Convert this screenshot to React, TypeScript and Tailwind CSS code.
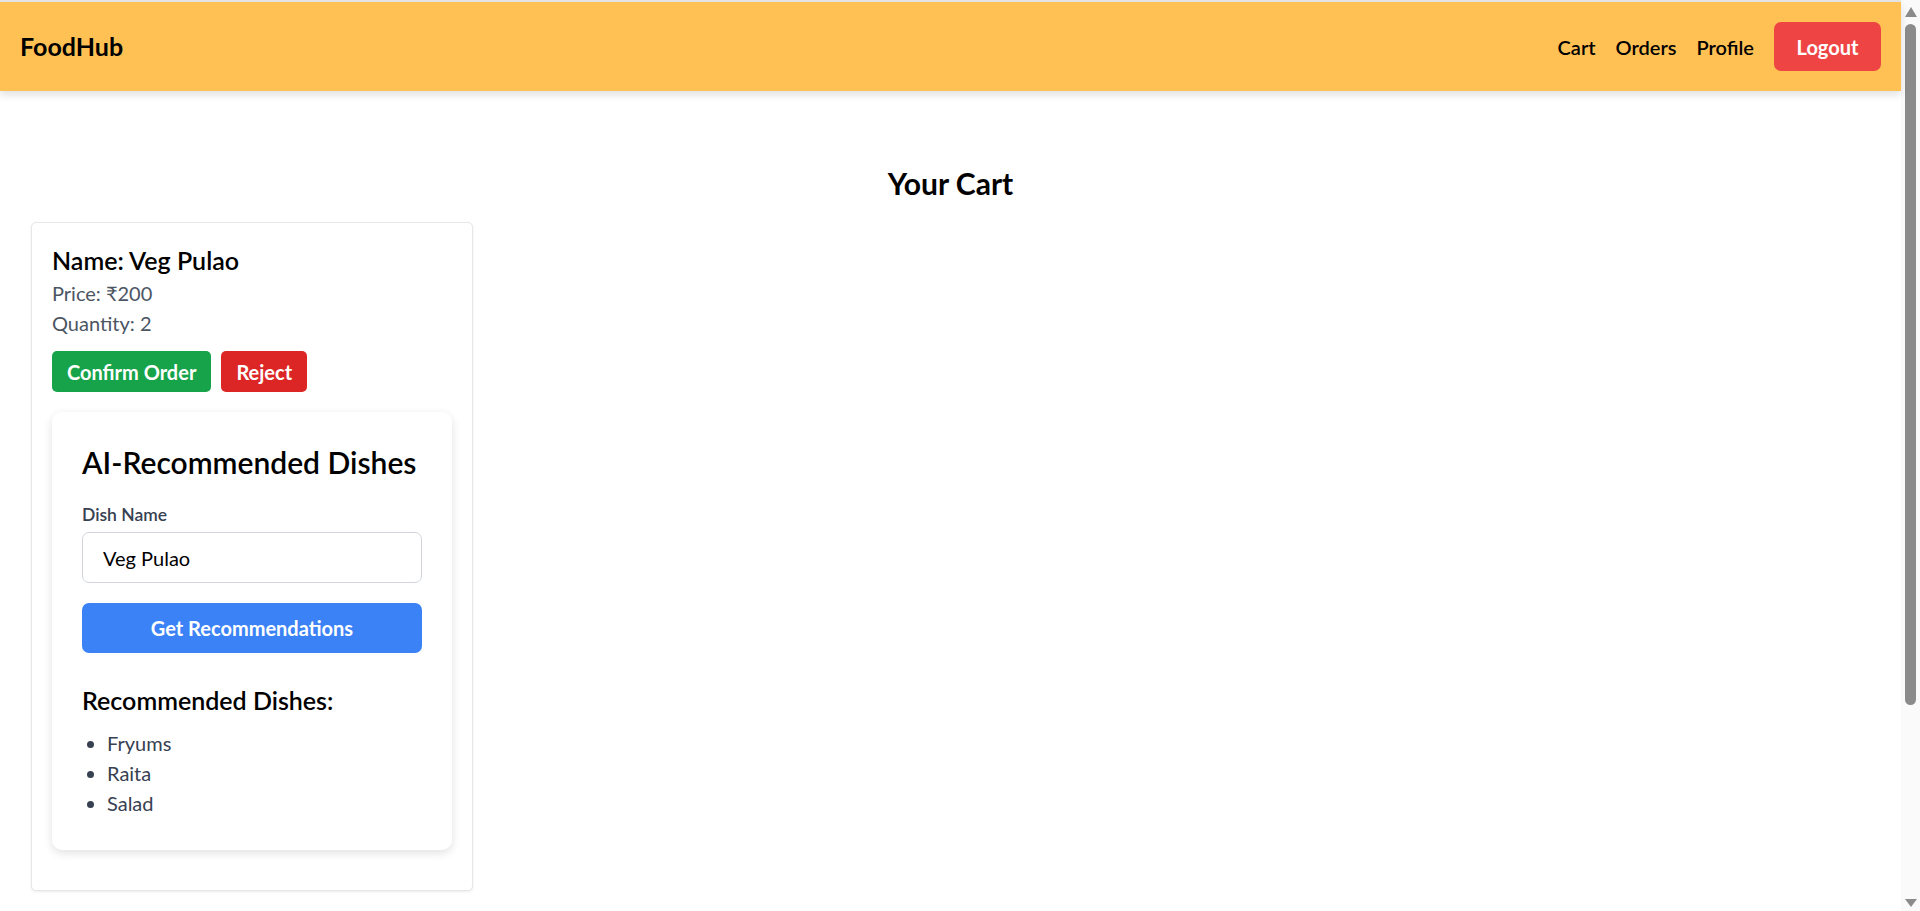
import React, { useState } from 'react';

type CartItem = {
  id: number;
  name: string;
  price: number;
  quantity: number;
};

const cartItems: CartItem[] = [{ id: 1, name: 'Veg Pulao', price: 200, quantity: 2 }];

const Navbar: React.FC = () => (
  <nav className="relative z-10 flex h-[89px] items-center justify-between bg-[#ffc154] px-5 shadow-[0_4px_8px_rgba(0,0,0,0.12)]">
    <span className="text-[25px] font-bold leading-[35px] text-black">FoodHub</span>
    <div className="flex items-center gap-5 text-[20px] font-semibold leading-[30px] text-black">
      <a href="#cart">Cart</a>
      <a href="#orders">Orders</a>
      <a href="#profile">Profile</a>
      <button className="h-[49px] w-[107px] rounded-[7px] bg-[#ef4444] text-[20px] font-bold text-white">
        Logout
      </button>
    </div>
  </nav>
);

const Recommendations: React.FC<{ initialDish: string }> = ({ initialDish }) => {
  const [dish, setDish] = useState(initialDish);
  const [dishes] = useState<string[]>(['Fryums', 'Raita', 'Salad']);

  return (
    <div className="mt-5 mb-5 rounded-[10px] bg-white px-[30px] pt-[30px] pb-[32px] shadow-[0_3px_10px_rgba(0,0,0,0.12)]">
      <h2 className="mb-5 text-[30px] font-semibold leading-[40px] text-black">AI-Recommended Dishes</h2>
      <label className="mb-[5px] block text-[17.5px] font-semibold leading-[25px] text-[#374151]">
        Dish Name
      </label>
      <input
        type="text"
        value={dish}
        onChange={(e) => setDish(e.target.value)}
        className="block h-[51px] w-full rounded-[7px] border border-[#d1d5db] px-5 text-[20px] text-black outline-none"
      />
      <button className="mt-5 h-[50px] w-full rounded-[7px] bg-[#3b82f6] text-[20px] font-bold text-white">
        Get Recommendations
      </button>

      {/* results */}
      <h3 className="mt-[30px] mb-[10px] text-[25px] font-semibold leading-[35px] text-black">Recommended Dishes:</h3>
      <ul className="list-disc pl-[25px] text-[20px] leading-[30px] text-[#374151] marker:text-[#374151]">
        {dishes.map((d) => (
          <li key={d}>{d}</li>
        ))}
      </ul>
    </div>
  );
};

// browser scrollbar as it shows in the screenshot
const Scrollbar: React.FC = () => (
  <div className="flex h-screen w-[19px] shrink-0 flex-col items-center bg-[#fafafa]">
    <div className="mt-[7px] h-0 w-0 border-x-[6px] border-b-[10px] border-x-transparent border-b-[#8b8b8b]" />
    <div className="mt-[7px] h-[681px] w-[11px] rounded-full bg-[#8b8b8b]" />
    <div className="mt-auto mb-[4px] h-0 w-0 border-x-[6px] border-t-[8px] border-x-transparent border-t-[#8b8b8b]" />
  </div>
);

const App: React.FC = () => {
  return (
    <div className="flex h-screen overflow-hidden bg-white font-['Lato',sans-serif]">
      <div className="min-w-0 flex-1">
        <div className="h-[2px] bg-[#e6e6e6]" />
        <Navbar />

        <main className="px-[31px] pt-[72px] pb-[275px]">
          <h1 className="mb-[19px] text-center text-[30px] font-bold leading-[40px] text-black">Your Cart</h1>

          <div className="grid grid-cols-[442px] gap-6">
            {cartItems.map((item) => (
              <div
                key={item.id}
                className="rounded-[5px] border border-[#e5e7eb] bg-white p-5 shadow-[0_1px_3px_rgba(0,0,0,0.08)]"
              >
                <h2 className="text-[25px] font-semibold leading-[35px] text-black">Name: {item.name}</h2>
                <p className="text-[20px] leading-[30px] text-[#4b5563]">Price: ₹{item.price}</p>
                <p className="text-[20px] leading-[30px] text-[#4b5563]">Quantity: {item.quantity}</p>
                <div className="mt-[13px] flex gap-[10px]">
                  <button className="h-[41px] rounded-[5px] bg-[#16a34a] px-[15px] text-[20px] font-bold text-white">
                    Confirm Order
                  </button>
                  <button className="h-[41px] rounded-[5px] bg-[#dc2626] px-[15px] text-[20px] font-bold text-white">
                    Reject
                  </button>
                </div>
                <Recommendations initialDish={item.name} />
              </div>
            ))}
          </div>
        </main>
      </div>
      <Scrollbar />
    </div>
  );
};

export default App;
